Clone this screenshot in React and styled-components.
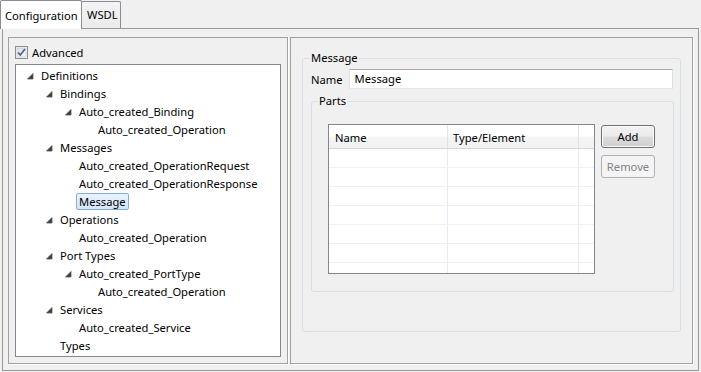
import React from 'react';
import styled, { createGlobalStyle } from 'styled-components';

const Global = createGlobalStyle`
  html, body { margin: 0; padding: 0; background: #f0f0f0; }
  body {
    font-family: "Noto Sans", "Open Sans", sans-serif;
    font-size: 11.2px;
    color: #000;
  }
  * { box-sizing: border-box; }
`;

const Window = styled.div`
  width: 701px;
  height: 372px;
  padding: 0 2px 1px 2px;
  display: flex;
  flex-direction: column;
`;

const TabBar = styled.div`
  height: 28px;
  display: flex;
  align-items: flex-end;
`;

const Tab = styled.div`
  position: relative;
  z-index: ${p => (p.$active ? 2 : 1)};
  height: ${p => (p.$active ? '29px' : '27px')};
  margin-bottom: ${p => (p.$active ? '-1px' : '0')};
  margin-left: ${p => p.$ml}px;
  width: ${p => p.$w}px;
  border: 1px solid #898c95;
  border-bottom: none;
  border-radius: 2px 2px 0 0;
  background: ${p => (p.$active ? '#ffffff' : 'linear-gradient(#f3f3f3, #ebebeb)')};
  padding: ${p => (p.$active ? '7px 0 0 4px' : '5px 0 0 5px')};
  line-height: 16px;
  white-space: nowrap;
`;

const Frame = styled.div`
  flex: 1;
  border: 1px solid #9a9a9a;
  display: flex;
  gap: 2px;
  padding: 8px 5px 6px 5px;
`;

const Panel = styled.div`
  width: ${p => p.$w}px;
  border: 1px solid #a0a0a0;
  box-shadow: 1px 1px 0 #ffffff;
  display: flex;
  flex-direction: column;
`;

const LeftPanel = styled(Panel)`
  padding: 8px 6px 6px 6px;
`;

const RightPanel = styled(Panel)`
  padding: 12px 11px 0 11px;
`;

const CheckRow = styled.label`
  display: flex;
  align-items: center;
  height: 13px;
  gap: 4px;
  line-height: 13px;
  margin-bottom: 5px;
`;

const TreeBox = styled.div`
  flex: 1;
  background: #ffffff;
  border: 1px solid #828790;
  padding-top: 1px;
`;

const TreeRow = styled.div`
  height: 18px;
  display: flex;
  align-items: center;
  padding-left: ${p => 9 + p.$level * 19}px;
  white-space: nowrap;
`;

const Expander = styled.span`
  width: 16px;
  height: 18px;
  flex: none;
  display: flex;
  align-items: center;
  padding-left: 2px;
  padding-top: 2px;
`;

const ItemLabel = styled.span`
  line-height: 15px;
  ${p =>
    p.$selected
      ? `
    margin-left: -3px;
    padding: 0 2px;
    border: 1px solid #84acdd;
    border-radius: 2px;
    background: linear-gradient(#eaf3fd, #d3e5fb);
  `
      : ''}
`;

const Group = styled.fieldset`
  margin: ${p => p.$margin || '0'};
  padding: ${p => p.$padding};
  border: 1px solid #d5dfe5;
  border-radius: 3px;
  min-width: 0;
`;

const Legend = styled.legend`
  padding: 0 1px;
  margin-left: -1px;
  line-height: 16px;
`;

const NameRow = styled.div`
  display: flex;
  align-items: center;
  gap: 6px;
  margin-bottom: 4px;
`;

const TextInput = styled.div`
  flex: 1;
  height: 20px;
  background: #ffffff;
  border: 1px solid #abadb3;
  border-left-color: #e2e3ea;
  border-right-color: #dbdfe6;
  border-bottom-color: #e3e9ef;
  padding-left: 5px;
  line-height: 18px;
`;

const PartsRow = styled.div`
  display: flex;
  gap: 6px;
  padding-left: 9px;
`;

const Table = styled.div`
  width: 267px;
  height: 150px;
  border: 1px solid #828790;
  background: #ffffff;
  overflow: hidden;
`;

const HeaderRow = styled.div`
  display: grid;
  grid-template-columns: 119px 131px 15px;
  height: 24px;
  border-bottom: 1px solid #d5d5d5;
  background: linear-gradient(#ffffff 0%, #ffffff 45%, #f3f4f6 55%, #f1f2f4 100%);
`;

const HeaderCell = styled.div`
  border-right: ${p => (p.$last ? 'none' : '1px solid #e2e3e6')};
  padding-left: ${p => p.$pad}px;
  padding-top: 2px;
  line-height: 21px;
`;

const BodyRow = styled.div`
  display: grid;
  grid-template-columns: 119px 131px 15px;
  height: 19px;
  border-bottom: 1px solid #f0f0f0;
`;

const BodyCell = styled.div`
  border-right: ${p => (p.$last ? 'none' : '1px solid #e6ecf3')};
`;

const ButtonCol = styled.div`
  display: flex;
  flex-direction: column;
  gap: 7px;
  padding-top: 1px;
`;

const Button = styled.div`
  width: 54px;
  height: 23px;
  border: 1px solid ${p => (p.$disabled ? '#adb2b5' : '#707070')};
  border-radius: 3px;
  background: ${p =>
    p.$disabled
      ? '#f4f4f4'
      : 'linear-gradient(#f2f2f2 0%, #ebebeb 48%, #dddddd 52%, #cfcfcf 100%)'};
  box-shadow: ${p => (p.$disabled ? 'none' : 'inset 0 0 0 1px #fcfcfc')};
  color: ${p => (p.$disabled ? '#838383' : '#000')};
  display: flex;
  align-items: center;
  justify-content: center;
  line-height: 16px;
`;

function Triangle() {
  return (
    <svg width="7" height="7" viewBox="0 0 7 7">
      <polygon points="6,0.5 6,6 0.5,6" fill="#3c3c3c" stroke="#595959" strokeWidth="0.8" />
    </svg>
  );
}

function CheckBox() {
  return (
    <svg width="13" height="13" viewBox="0 0 13 13">
      <defs>
        <linearGradient id="cbg" x1="0" y1="0" x2="1" y2="1">
          <stop offset="0" stopColor="#dedede" />
          <stop offset="1" stopColor="#fbfbfb" />
        </linearGradient>
      </defs>
      <rect x="0.5" y="0.5" width="12" height="12" fill="#f4f4f4" stroke="#8e8f8f" />
      <rect x="2" y="2" width="9" height="9" fill="url(#cbg)" stroke="#c6c6c6" strokeWidth="0.6" />
      <path d="M3 6.5 L5.3 9 L10 3" fill="none" stroke="#4a5f97" strokeWidth="1.7" />
    </svg>
  );
}

const tree = [
  { level: 0, label: 'Definitions', exp: true },
  { level: 1, label: 'Bindings', exp: true },
  { level: 2, label: 'Auto_created_Binding', exp: true },
  { level: 3, label: 'Auto_created_Operation' },
  { level: 1, label: 'Messages', exp: true },
  { level: 2, label: 'Auto_created_OperationRequest' },
  { level: 2, label: 'Auto_created_OperationResponse' },
  { level: 2, label: 'Message', selected: true },
  { level: 1, label: 'Operations', exp: true },
  { level: 2, label: 'Auto_created_Operation' },
  { level: 1, label: 'Port Types', exp: true },
  { level: 2, label: 'Auto_created_PortType', exp: true },
  { level: 3, label: 'Auto_created_Operation' },
  { level: 1, label: 'Services', exp: true },
  { level: 2, label: 'Auto_created_Service' },
  { level: 1, label: 'Types' },
];

export default function App() {
  const rows = Array.from({ length: 7 });
  return (
    <>
      <Global />
      <Window>
        <TabBar>
          <Tab $active $w={82} $ml={-2}>Configuration</Tab>
          <Tab $w={40} $ml={-1}>WSDL</Tab>
        </TabBar>
        <Frame>
          <LeftPanel $w={280}>
            <CheckRow>
              <CheckBox />
              <span>Advanced</span>
            </CheckRow>
            <TreeBox>
              {tree.map((t, i) => (
                <TreeRow key={i} $level={t.level}>
                  <Expander>{t.exp ? <Triangle /> : null}</Expander>
                  <ItemLabel $selected={t.selected}>{t.label}</ItemLabel>
                </TreeRow>
              ))}
            </TreeBox>
          </LeftPanel>
          <RightPanel $w={403}>
            <Group $padding="3px 7px 39px 8px">
              <Legend>Message</Legend>
              <NameRow>
                <span>Name</span>
                <TextInput>Message</TextInput>
              </NameRow>
              <Group $padding="15px 18px 17px 7px" $margin="0 -1px 0 0">
                <Legend>Parts</Legend>
                <PartsRow>
                  <Table>
                    <HeaderRow>
                      <HeaderCell $pad={6}>Name</HeaderCell>
                      <HeaderCell $pad={5}>Type/Element</HeaderCell>
                      <HeaderCell $last />
                    </HeaderRow>
                    {rows.map((_, i) => (
                      <BodyRow key={i}>
                        <BodyCell />
                        <BodyCell />
                        <BodyCell $last />
                      </BodyRow>
                    ))}
                  </Table>
                  <ButtonCol>
                    <Button>Add</Button>
                    <Button $disabled>Remove</Button>
                  </ButtonCol>
                </PartsRow>
              </Group>
            </Group>
          </RightPanel>
        </Frame>
      </Window>
    </>
  );
}
